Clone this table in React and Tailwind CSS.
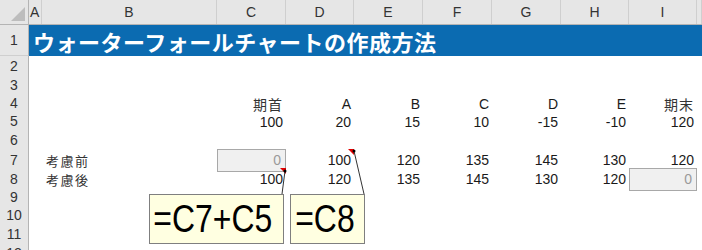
import React from "react";

const cols = "grid grid-cols-[29px_13px_175px_69px_68px_69px_69px_69px_68px_68px_1fr]";
const jp = "font-['Noto_Sans_CJK_JP',sans-serif]";
const num = "font-['Liberation_Sans',Arial,sans-serif]";

const Row = ({ n, h, children }) => (
  <div className={`${cols} ${h}`}>
    <div className={`flex items-center justify-center bg-[#e6e6e6] border-r border-b border-r-[#b4b4b4] border-b-[#cfcfcf] text-[14px] text-[#333] ${num}`}>
      {n}
    </div>
    {children}
  </div>
);

const Cell = ({ children, jpText }) => (
  <div
    className={`flex items-center justify-end pr-[3px] text-[14px] text-[#1a1a1a] ${
      jpText ? `${jp} text-[13px] tracking-[1px] text-[#333]` : num
    }`}
  >
    {children}
  </div>
);

const GrayBox = () => (
  <div className={`flex items-center justify-end pr-[4px] bg-[#f0f0f0] border border-[#a8a8a8] text-[14px] text-[#9a9a9a] ${num}`}>
    0
  </div>
);

const Blank = () => <div />;

const App = () => {
  const letters = ["A", "B", "C", "D", "E", "F", "G", "H", "I", ""];
  return (
    <div className="relative w-[702px] h-[250px] overflow-hidden bg-white">
      {/* column header */}
      <div className={`${cols} h-[25px] bg-[#e6e6e6] border-b border-[#b4b4b4]`}>
        <div className="relative border-r border-[#b4b4b4]">
          <svg className="absolute right-[3px] bottom-[3px]" width="14" height="14" viewBox="0 0 14 14">
            <polygon points="14,0 14,14 0,14" fill="#bdbdbd" />
          </svg>
        </div>
        {letters.map((l, i) => (
          <div
            key={i}
            className={`flex items-center justify-center border-r border-[#cfcfcf] text-[14px] text-[#333] ${num} ${
              l === "A" ? "justify-start pl-[1px]" : ""
            }`}
          >
            {l}
          </div>
        ))}
      </div>

      {/* row 1 title */}
      <div className="grid grid-cols-[29px_1fr] h-[31px]">
        <div className={`flex items-center justify-center bg-[#e6e6e6] border-r border-b border-r-[#b4b4b4] border-b-[#cfcfcf] text-[14px] text-[#333] ${num}`}>
          1
        </div>
        <div className={`flex items-center pl-[4px] bg-[#0b6bb1] text-white text-[22px] tracking-[0.5px] font-bold leading-none ${jp}`}>
          ウォーターフォールチャートの作成方法
        </div>
      </div>

      <Row n="2" h="h-[19px]" />
      <Row n="3" h="h-[18px]" />
      <Row n="4" h="h-[18px]">
        <Blank />
        <Blank />
        <Cell jpText>期首</Cell>
        <Cell>A</Cell>
        <Cell>B</Cell>
        <Cell>C</Cell>
        <Cell>D</Cell>
        <Cell>E</Cell>
        <Cell jpText>期末</Cell>
      </Row>
      <Row n="5" h="h-[19px]">
        <Blank />
        <Blank />
        <Cell>100</Cell>
        <Cell>20</Cell>
        <Cell>15</Cell>
        <Cell>10</Cell>
        <Cell>-15</Cell>
        <Cell>-10</Cell>
        <Cell>120</Cell>
      </Row>
      <Row n="6" h="h-[19px]" />
      <Row n="7" h="h-[19px]">
        <Blank />
        <div className={`flex items-center pl-[4px] text-[13px] tracking-[1.5px] text-[#333] ${jp}`}>考慮前</div>
        <GrayBox />
        <Cell>100</Cell>
        <Cell>120</Cell>
        <Cell>135</Cell>
        <Cell>145</Cell>
        <Cell>130</Cell>
        <Cell>120</Cell>
      </Row>
      <Row n="8" h="h-[19px]">
        <Blank />
        <div className={`flex items-center pl-[4px] text-[13px] tracking-[1.5px] text-[#333] ${jp}`}>考慮後</div>
        <Cell>100</Cell>
        <Cell>120</Cell>
        <Cell>135</Cell>
        <Cell>145</Cell>
        <Cell>130</Cell>
        <Cell>120</Cell>
        <GrayBox />
      </Row>
      <Row n="9" h="h-[18px]" />
      <Row n="10" h="h-[19px]" />
      <Row n="11" h="h-[19px]" />
      <Row n="12" h="h-[19px]" />

      {/* comment markers and connector lines */}
      <svg className="absolute inset-0 pointer-events-none" width="702" height="250">
        <polygon points="348,149 354,149 354,155" fill="#e00000" />
        <polygon points="280,168 286,168 286,174" fill="#e00000" />
        <line x1="354" y1="151" x2="364" y2="194" stroke="#333" strokeWidth="1" />
        <line x1="285" y1="171" x2="282" y2="194" stroke="#333" strokeWidth="1" />
        <circle cx="354" cy="151" r="1.5" fill="#000" />
        <circle cx="285" cy="171" r="1.5" fill="#000" />
      </svg>

      {/* callouts */}
      <div className="absolute left-[149px] top-[194px] w-[135px] h-[50px] flex items-center bg-[#ffffe1] border border-[#7f7f7f] overflow-hidden">
        <div className={`pl-[4px] text-[38px] leading-none text-black origin-left scale-x-[0.84] whitespace-nowrap ${num}`}>
          =C7+C5
        </div>
      </div>
      <div className="absolute left-[290px] top-[194px] w-[75px] h-[50px] flex items-center bg-[#ffffe1] border border-[#7f7f7f] overflow-hidden">
        <div className={`pl-[5px] text-[38px] leading-none text-black origin-left scale-x-[0.84] whitespace-nowrap ${num}`}>
          =C8
        </div>
      </div>
    </div>
  );
};

export default App;
